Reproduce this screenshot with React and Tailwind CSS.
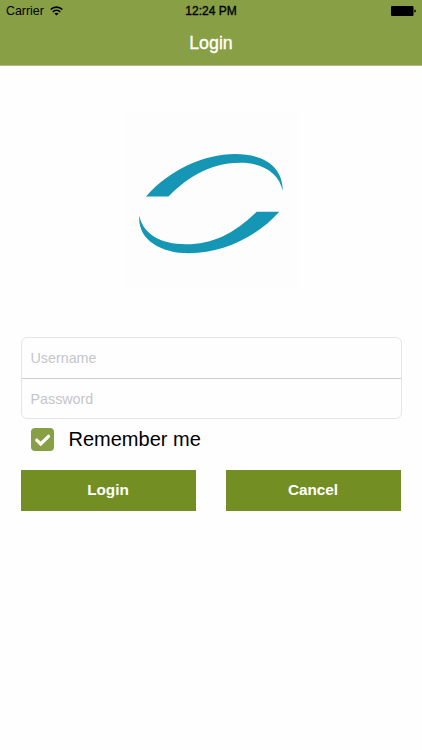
import { useState } from 'react';

const StatusBar = () => (
  <div className="grid h-[22px] grid-cols-3 items-center pl-[6px] pr-[6px] text-[12px] leading-[22px] text-black">
    <div className="flex items-center gap-[6px]">
      <span className="text-[12.4px]">Carrier</span>
      <svg width="13" height="10" viewBox="0 0 13 10" fill="none" stroke="currentColor" strokeWidth="1.7">
        <path d="M0.7 3.5C3.9 0.3 9.1 0.3 12.3 3.5" />
        <path d="M2.8 5.9C4.9 3.9 8.1 3.9 10.2 5.9" />
        <path d="M6.5 9.6L4.4 7.5C5.6 6.4 7.4 6.4 8.6 7.5Z" fill="currentColor" stroke="none" />
      </svg>
    </div>
    <span className="text-center [-webkit-text-stroke:0.35px_currentColor]">12:24 PM</span>
    <svg className="justify-self-end" width="25" height="10" viewBox="0 0 25 10" fill="currentColor">
      <rect width="22.5" height="10" rx="1" />
      <path d="M23.3 3.4C25.4 3.8 25.4 6.2 23.3 6.6Z" />
    </svg>
  </div>
);

const Logo = () => (
  <div className="ml-[122px] h-[177px] w-[177px] bg-[#fdfdfd]">
    <svg width="177" height="177" viewBox="0 0 177 177" fill="#1496b4">
      <path d="M24 84.5C47 58 82 42 113 42C142 42 161 55 160.7 78.8C157 61 141 50.7 118 50.7C91 50.7 68 62.5 46.5 84.5Z" />
      <path d="M157.3 99.8C134 126 99 141.2 67.5 141.2C37 141.2 15.5 126.5 17.3 103.8C21 121.5 38 132.3 64 132.3C91 132.3 112 121.5 134.7 99.8Z" />
    </svg>
  </div>
);

const App = () => {
  const [username, setUsername] = useState('');
  const [password, setPassword] = useState('');
  const [remember, setRemember] = useState(true);

  return (
    <div className="min-h-screen bg-[#fefefe] font-['Liberation_Sans',Arial,sans-serif] text-black">
      <header className="h-[66px] border-b border-[#a9b985] bg-[#889f45]">
        <StatusBar />
        <h1 className="text-center text-[17.8px] leading-[43px] text-white [-webkit-text-stroke:0.35px_currentColor]">Login</h1>
      </header>

      <main className="pt-[46px]">
        <Logo />

        <form className="mx-auto mt-[48px] w-[381px]" onSubmit={(e) => e.preventDefault()}>
          {/* Credentials */}
          <div className="flex h-[82px] flex-col rounded-[6px] border border-[#e5e5e5]">
            <input
              type="text"
              value={username}
              onChange={(e) => setUsername(e.target.value)}
              placeholder="Username"
              className="h-[41px] border-b border-[#cbcfcb] px-[9px] text-[14.3px] outline-none placeholder:text-[#c5c5ca]"
            />
            <input
              type="password"
              value={password}
              onChange={(e) => setPassword(e.target.value)}
              placeholder="Password"
              className="h-[39px] px-[9px] text-[14.3px] outline-none placeholder:text-[#c5c5ca]"
            />
          </div>

          <div className="mt-[9px] flex h-[23px] items-center pl-[10px]">
            <button
              type="button"
              role="checkbox"
              aria-checked={remember}
              aria-label="Remember me"
              onClick={() => setRemember(!remember)}
              className="h-[23px] w-[23px] rounded-[4px] bg-[#889f45]"
            >
              {remember && (
                <svg width="23" height="23" viewBox="0 0 23 23" fill="none" stroke="white" strokeWidth="3.3" strokeLinecap="round">
                  <path d="M5.7 12.1L9.7 16L17.5 8.3" />
                </svg>
              )}
            </button>
            <span className="ml-[15px] text-[20px] leading-[25px]">Remember me</span>
          </div>

          <div className="mt-[19px] flex gap-[30px] text-[15.3px] font-bold text-white">
            <button type="submit" className="h-[41px] w-[175px] bg-[#738f23]">Login</button>
            <button type="button" className="h-[41px] w-[175px] bg-[#738f23]">Cancel</button>
          </div>
        </form>
      </main>
    </div>
  );
};

export default App;
